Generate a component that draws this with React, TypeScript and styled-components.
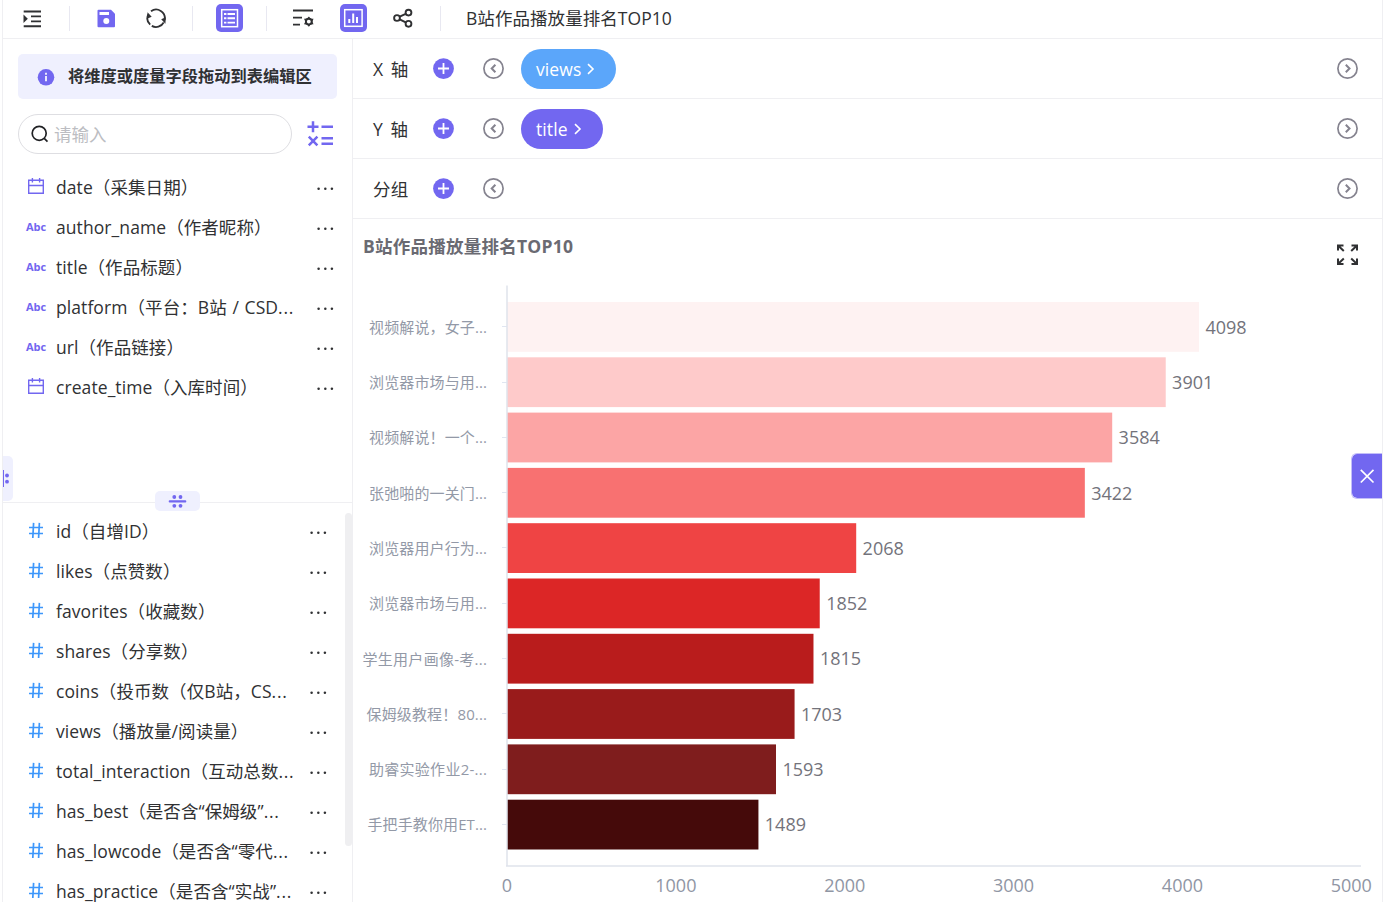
import React from "react";
import styled, { createGlobalStyle } from "styled-components";

const PURPLE = "#7267f0";
const LINE = "#efeff2";
const INK = "#303133";
const FONT = '"Open Sans", "Noto Sans CJK SC", sans-serif';

const GlobalStyle = createGlobalStyle`
  * { box-sizing: border-box; }
  body { margin: 0; background: #fff; overflow: hidden; }
`;

const Page = styled.div`
  position: relative;
  display: flex;
  flex-direction: column;
  width: 1381px;
  height: 902px;
  margin-left: 2px;
  border-left: 1px solid ${LINE};
  border-right: 1px solid ${LINE};
  font-family: ${FONT};
  font-size: 17.5px;
  color: ${INK};
  background: #fff;
  overflow: hidden;
`;

const Toolbar = styled.header`
  display: flex;
  align-items: flex-start;
  flex: none;
  height: 39px;
  padding: 4px 0 0 19px;
  border-bottom: 1px solid ${LINE};
`;

const ToolIcon = styled.svg<{ $gap?: number }>`
  display: block;
  flex: none;
  height: 28px;
  margin-left: ${(p) => p.$gap ?? 0}px;
`;

const Separator = styled.i<{ $gap: number }>`
  flex: none;
  width: 1px;
  height: 25px;
  margin: 2px 0 0 ${(p) => p.$gap}px;
  background: #e8e8f1;
`;

const ToolButton = styled.div<{ $gap: number }>`
  flex: none;
  width: 27px;
  height: 28px;
  margin-left: ${(p) => p.$gap}px;
  border-radius: 5px;
  background: ${PURPLE};
`;

const DocTitle = styled.div`
  margin-left: 25px;
  line-height: 28px;
  letter-spacing: 0.06px;
  white-space: nowrap;
`;

const Main = styled.div`
  display: flex;
  flex: 1;
  min-height: 0;
`;

const Sidebar = styled.aside`
  display: flex;
  flex-direction: column;
  flex: none;
  width: 350px;
  border-right: 1px solid ${LINE};
`;

const Dimensions = styled.section`
  flex: none;
  height: 464px;
  padding: 15px 15px 0;
  border-bottom: 1px solid ${LINE};
`;

const Measures = styled.section`
  flex: 1;
  min-height: 0;
  display: flex;
  overflow: hidden;
`;

const MeasureList = styled.div`
  flex: 1;
  padding: 8px 0 0 15px;
`;

const ScrollThumb = styled.div`
  flex: none;
  width: 7px;
  height: 333px;
  margin-top: 10px;
  border-radius: 4px;
  background: #efeff1;
`;

const Banner = styled.div`
  display: flex;
  align-items: center;
  width: 319px;
  height: 45px;
  padding-left: 19px;
  border-radius: 5px;
  background: #eff0fe;
  font-size: 16.25px;
  font-weight: 700;
  white-space: nowrap;
`;

const BannerText = styled.span`
  margin-left: 13px;
  padding-bottom: 1px;
  line-height: 24px;
`;

const SearchRow = styled.div`
  display: flex;
  align-items: center;
  margin: 15px 0 13px;
`;

const SearchBox = styled.div`
  display: flex;
  align-items: center;
  width: 274px;
  height: 40px;
  padding-left: 11px;
  border: 1px solid #dedee2;
  border-radius: 20px;
  color: #bcbdc2;
`;

const Placeholder = styled.span`
  margin-left: 4px;
  padding-bottom: 2px;
`;

const CalcIcon = styled.svg`
  margin-left: 14px;
`;

const Field = styled.div`
  display: flex;
  align-items: center;
  height: 40px;
`;

const FieldKind = styled.div`
  display: flex;
  align-items: center;
  flex: none;
  width: 38px;
  padding: 0 0 2px 8px;
  font-size: 11px;
  font-weight: 700;
  color: ${PURPLE};
`;

const FieldName = styled.div`
  flex: none;
  width: 250px;
  line-height: 24px;
  letter-spacing: 0.08px;
  word-spacing: 1px;
  white-space: nowrap;
`;

const Ellipsis = styled.span`
  letter-spacing: 0.7px;
`;

const Dots = styled.svg<{ $pull?: number }>`
  flex: none;
  margin-left: ${(p) => p.$pull ?? 0}px;
`;

const Content = styled.main`
  display: flex;
  flex-direction: column;
  flex: 1;
  min-width: 0;
`;

const AxisRow = styled.div`
  display: flex;
  align-items: center;
  flex: none;
  height: 60px;
  padding: 0 23px 0 20px;
  border-bottom: 1px solid ${LINE};
`;

const AxisLabel = styled.span`
  width: 60px;
  letter-spacing: 0.3px;
  word-spacing: 2.5px;
  white-space: nowrap;
`;

const RoundIcon = styled.svg<{ $push?: boolean; $gap?: number }>`
  flex: none;
  margin-left: ${(p) => (p.$push ? "auto" : `${p.$gap ?? 0}px`)};
`;

const Pill = styled.div<{ $color: string; $width: number }>`
  display: flex;
  align-items: center;
  width: ${(p) => p.$width}px;
  height: 40px;
  margin-left: 16px;
  padding-left: 15px;
  border-radius: 20px;
  background: ${(p) => p.$color};
  color: #fff;
  letter-spacing: 0.1px;
`;

const PillArrow = styled.svg`
  margin-left: 6px;
`;

const Chart = styled.svg`
  display: block;
  flex: none;
`;

const SplitHandle = styled.div`
  position: absolute;
  left: 152px;
  top: 491px;
  width: 45px;
  height: 20px;
  border-radius: 5px;
  background: #eff0fe;
`;

const EdgeHandle = styled.div`
  position: absolute;
  left: 0;
  top: 456px;
  width: 10px;
  height: 45px;
  border-radius: 0 5px 5px 0;
  background: #eff0fe;
`;

const CloseTab = styled.div`
  position: absolute;
  right: 0;
  top: 453px;
  width: 31px;
  height: 46px;
  border: 1px solid #c3bef9;
  border-right: 0;
  border-radius: 6px 0 0 6px;
  background: ${PURPLE};
  background-clip: padding-box;
`;

const CalendarIcon = () => (
  <svg width="20" height="20" viewBox="0 0 20 20" fill="none" stroke={PURPLE} strokeWidth="1.4">
    <path d="M2.7 4.2h14.6v13H2.7zM2.7 9.5h14.6M6.400 1.900v4.600M13.600 1.900v4.600" />
  </svg>
);

const HashIcon = () => (
  <svg width="20" height="20" viewBox="0 0 20 20" fill="none" stroke="#3d97fb" strokeWidth="1.700">
    <path d="M3 7.500h14M3 13.500h14M7.600 2.900L6.800 18M13.400 2.900l-.8 15.100" />
  </svg>
);

const MoreDots = ({ pull }: { pull?: number }) => (
  <Dots width="20" height="20" viewBox="0 0 20 20" fill="#303133" $pull={pull}>
    <circle cx="2.600" cy="11.700" r="1.250" />
    <circle cx="9.300" cy="11.700" r="1.250" />
    <circle cx="15.900" cy="11.700" r="1.250" />
  </Dots>
);

const PlusCircle = () => (
  <RoundIcon width="22" height="22" viewBox="0 0 22 22" fill="none">
    <circle cx="10.500" cy="10.600" r="10.400" fill={PURPLE} />
    <path d="M5 10.500h11M10.500 5v11" stroke="#fff" strokeWidth="1.800" />
  </RoundIcon>
);

const ChevronCircle = ({ right }: { right?: boolean }) => (
  <RoundIcon $push={right} $gap={28} width="22" height="22" viewBox="0 0 22 22" fill="none" stroke="#85838f">
    <circle cx="10.500" cy="10.500" r="9.600" strokeWidth="1.700" />
    <path d={right ? "M8.800 6.700l3.700 3.800-3.700 3.800" : "M12.400 6.700l-3.700 3.800 3.700 3.800"} strokeWidth="2" />
  </RoundIcon>
);

const Arrow = () => (
  <PillArrow width="8" height="14" viewBox="0 0 8 14" fill="none" stroke="#fff" strokeWidth="1.600">
    <path d="M1 2.200L6 7l-5 4.800" />
  </PillArrow>
);

type Kind = "date" | "text";

const dimensions: { kind: Kind; name: string }[] = [
  { kind: "date", name: "date（采集日期）" },
  { kind: "text", name: "author_name（作者昵称）" },
  { kind: "text", name: "title（作品标题）" },
  { kind: "text", name: "platform（平台：B站 / CSD..." },
  { kind: "text", name: "url（作品链接）" },
  { kind: "date", name: "create_time（入库时间）" },
];

const measures = [
  "id（自增ID）",
  "likes（点赞数）",
  "favorites（收藏数）",
  "shares（分享数）",
  "coins（投币数（仅B站，CS...",
  "views（播放量/阅读量）",
  "total_interaction（互动总数...",
  "has_best（是否含“保姆级”...",
  "has_lowcode（是否含“零代...",
  "has_practice（是否含“实战”...",
];

const Name = ({ text }: { text: string }) =>
  text.endsWith("...") ? (
    <FieldName>
      {text.slice(0, -3)}
      <Ellipsis>...</Ellipsis>
    </FieldName>
  ) : (
    <FieldName>{text}</FieldName>
  );

const bars = [
  { label: "视频解说，女子...", value: 4098, color: "#fef2f2", start: 369 },
  { label: "浏览器市场与用...", value: 3901, color: "#fecaca", start: 369 },
  { label: "视频解说！一个...", value: 3584, color: "#fca5a5", start: 369 },
  { label: "张弛啪的一关门...", value: 3422, color: "#f87171", start: 369 },
  { label: "浏览器用户行为...", value: 2068, color: "#ef4444", start: 369 },
  { label: "浏览器市场与用...", value: 1852, color: "#dc2626", start: 369 },
  { label: "学生用户画像-考...", value: 1815, color: "#b91c1c", start: 362.5 },
  { label: "保姆级教程！80...", value: 1703, color: "#991b1b", start: 366.5 },
  { label: "助睿实验作业2-...", value: 1593, color: "#7f1d1d", start: 369 },
  { label: "手把手教你用ET...", value: 1489, color: "#450a0a", start: 367.5 },
];

const X0 = 507;
const UNIT = 0.16886;

const BarChart = () => (
  <Chart width="1029" height="683" viewBox="353 219 1029 683" fontFamily={FONT}>
    <text x="363" y="253" fontSize="17.5" fontWeight="700" fill="#6a6a72" textLength="210">B站作品播放量排名TOP10</text>
    <path
      d="M1338 250.500V245.500h5.500M1338.500 246l5.300 5M1351.500 245.500h5.500v5M1356.500 246l-5.300 5M1338 258.500v5.500h5.500M1338.500 263.500l5.300-5M1351.500 264h5.500v-5.500M1356.500 263.500l-5.300-5"
      stroke="#303133"
      strokeWidth="2"
      fill="none"
    />
    {bars.map((b, i) => {
      const top = 302 + i * 55.3;
      return (
        <g key={i}>
          <path d={`M502 ${Math.round(top + 24.2) + 0.5}h5`} stroke="#e0e6f1" />
          <rect x={X0} y={top} width={b.value * UNIT} height="49.800" fill={b.color} />
          <text x={b.start} y={top + 30.7} textLength={487 - b.start} fontSize="15" fill="#9399a7">{b.label}</text>
          <text x={X0 + b.value * UNIT + 6.400} y={top + 31.600} fontSize="18" fill="#73737b">{b.value}</text>
        </g>
      );
    })}
    <path d="M507 285.500V866M506 866h855" stroke="#e0e3ec" strokeWidth="1.500" fill="none" />
    {[0, 1000, 2000, 3000, 4000, 5000].map((t) => (
      <text key={t} x={X0 + t * UNIT} y="891.600" textAnchor="middle" fontSize="18" fill="#9096a4">{t}</text>
    ))}
  </Chart>
);

const gearTeeth = [0, 60, 120, 180, 240, 300];

export default function App() {
  return (
    <>
      <GlobalStyle />
      <Page>
        <Toolbar>
          <ToolIcon width="20" viewBox="22 4 20 28" fill="none" stroke={INK} strokeWidth="1.900">
            <path d="M23.700 11.500H41M31 16.400h10M31 21.400h10M23.700 26.200H41" />
            <path d="M23.500 14.500v8.500l4.300-4.250z" fill={INK} stroke="none" />
          </ToolIcon>
          <Separator $gap={27} />
          <ToolIcon width="20" $gap={26} viewBox="96 4 20 28">
            <path d="M98.500 9.700H111l4 4v12.500a1 1 0 0 1-1 1H98.500a1 1 0 0 1-1-1V10.700a1 1 0 0 1 1-1z" fill={PURPLE} />
            <path d="M99.500 12h9.500v3h-9.500z" fill="#fff" />
            <circle cx="106.300" cy="21" r="3" fill="#fff" />
          </ToolIcon>
          <ToolIcon width="22" $gap={30} viewBox="146 4 22 28" fill="none" stroke={INK} strokeWidth="1.800">
            <path d="M148.300 14.500A8.700 8.700 0 0 0 150.200 24.700M151 11.200a8.700 8.700 0 0 1 13.600 8.800" />
            <path d="M163.700 22.500a8.700 8.700 0 0 1-11.900 3.400" />
            <path d="M147.500 12.200l4.200 4.500-4.600 2zM165.400 23.800l-4.200-4.500 4.600-2z" fill={INK} stroke="none" />
          </ToolIcon>
          <Separator $gap={24} />
          <ToolButton $gap={23}>
            <ToolIcon width="27" viewBox="216 4 27 28" fill="none" stroke="#fff" strokeWidth="1.500">
              <rect x="221.700" y="9.700" width="15.800" height="17" />
              <path d="M227.500 14h7.500M227.500 18.300h7.500M227.500 22.600h7.500" strokeWidth="1.900" />
              <path d="M224 14h2.400M224 18.300h2.400M224 22.600h2.400" strokeWidth="1.900" />
            </ToolIcon>
          </ToolButton>
          <Separator $gap={23} />
          <ToolIcon width="22" $gap={25} viewBox="292 4 22 28" fill="none" stroke={INK} strokeWidth="1.900">
            <path d="M293 10.500h20M293 17.600h9M293 24.600h7" />
            <circle cx="308.800" cy="21.600" r="2.900" />
            {gearTeeth.map((a) => (
              <path key={a} d="M307.700 18.500l1.100-1.600 1.100 1.600z" strokeWidth="0.900" fill={INK} transform={`rotate(${a} 308.800 21.600)`} />
            ))}
          </ToolIcon>
          <ToolButton $gap={26}>
            <ToolIcon width="27" viewBox="340 4 27 28" fill="none" stroke="#fff" strokeWidth="1.500">
              <rect x="344.700" y="9.700" width="17.400" height="16.600" />
              <path d="M349.300 23v-4M353.200 23v-9.500M357 23v-6" strokeWidth="2" />
            </ToolIcon>
          </ToolButton>
          <ToolIcon width="22" $gap={25} viewBox="392 4 22 28" fill="none" stroke={INK} strokeWidth="1.900">
            <circle cx="397" cy="18" r="2.900" />
            <circle cx="408.500" cy="12.600" r="2.900" />
            <circle cx="408.500" cy="23.800" r="2.900" />
            <path d="M399.700 16.700l6-2.800M399.700 19.300l6 3" />
          </ToolIcon>
          <Separator $gap={26} />
          <DocTitle>B站作品播放量排名TOP10</DocTitle>
        </Toolbar>

        <Main>
          <Sidebar>
            <Dimensions>
              <Banner>
                <svg width="18" height="18" viewBox="0 0 18 18">
                  <circle cx="9" cy="9.300" r="8.300" fill={PURPLE} />
                  <path d="M9 8v5.300M9 4.800v1.900" stroke="#fff" strokeWidth="1.700" />
                </svg>
                <BannerText>将维度或度量字段拖动到表编辑区</BannerText>
              </Banner>
              <SearchRow>
                <SearchBox>
                  <svg width="20" height="20" viewBox="0 0 20 20" fill="none" stroke="#202124" strokeWidth="1.700">
                    <circle cx="9.200" cy="9.300" r="7" />
                    <path d="M14.200 14.300l3.300 3.300" />
                  </svg>
                  <Placeholder>请输入</Placeholder>
                </SearchBox>
                <CalcIcon width="28" height="28" viewBox="306 120 28 28" fill="none" stroke={PURPLE} strokeWidth="2.500">
                  <path d="M307.500 126.800h11M313 121.300v11M321.500 126.800h11.500M321.500 138.300h11.500M321.500 143.700h11.500M308.800 136.700l8.600 8.600M317.400 136.700l-8.600 8.600" />
                </CalcIcon>
              </SearchRow>
              {dimensions.map((f) => (
                <Field key={f.name}>
                  <FieldKind>{f.kind === "date" ? <CalendarIcon /> : "Abc"}</FieldKind>
                  <Name text={f.name} />
                  <MoreDots pull={10} />
                </Field>
              ))}
            </Dimensions>
            <Measures>
              <MeasureList>
                {measures.map((name) => (
                  <Field key={name}>
                    <FieldKind><HashIcon /></FieldKind>
                    <Name text={name} />
                    <MoreDots pull={3} />
                  </Field>
                ))}
              </MeasureList>
              <ScrollThumb />
            </Measures>
          </Sidebar>

          <Content>
            <AxisRow>
              <AxisLabel>X 轴</AxisLabel>
              <PlusCircle />
              <ChevronCircle />
              <Pill $color="#5ba6fa" $width={95}>views<Arrow /></Pill>
              <ChevronCircle right />
            </AxisRow>
            <AxisRow>
              <AxisLabel>Y 轴</AxisLabel>
              <PlusCircle />
              <ChevronCircle />
              <Pill $color={PURPLE} $width={82}>title<Arrow /></Pill>
              <ChevronCircle right />
            </AxisRow>
            <AxisRow>
              <AxisLabel>分组</AxisLabel>
              <PlusCircle />
              <ChevronCircle />
              <ChevronCircle right />
            </AxisRow>
            <BarChart />
          </Content>
        </Main>

        <EdgeHandle>
          <svg width="10" height="45" viewBox="0 0 10 45" fill={PURPLE}>
            <path d="M0 14h1v17H0z" />
            <circle cx="4" cy="19.500" r="1.900" />
            <circle cx="4" cy="25.700" r="1.900" />
          </svg>
        </EdgeHandle>
        <SplitHandle>
          <svg width="45" height="20" viewBox="0 0 45 20" fill={PURPLE}>
            <rect x="13.700" y="9.300" width="17.600" height="2.200" rx="1" />
            <circle cx="19.300" cy="6" r="1.900" />
            <circle cx="25.500" cy="6" r="1.900" />
            <circle cx="19.300" cy="14.800" r="1.900" />
            <circle cx="25.500" cy="14.800" r="1.900" />
          </svg>
        </SplitHandle>
        <CloseTab>
          <svg width="30" height="44" viewBox="0 0 30 44" fill="none" stroke="#fff" strokeWidth="1.700">
            <path d="M8.800 15.800l12.700 12.700M21.500 15.800L8.800 28.500" />
          </svg>
        </CloseTab>
      </Page>
    </>
  );
}
